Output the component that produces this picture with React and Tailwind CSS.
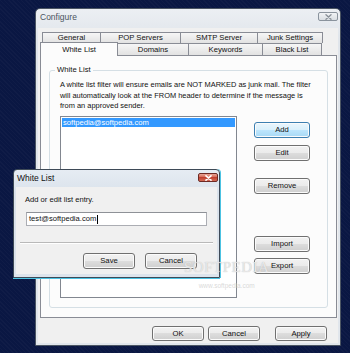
import React from "react";

const F = { fontFamily: '"Liberation Sans", Arial, sans-serif' };

function Btn({ children, className = "", def = false }) {
  return (
    <div
      className={
        "flex items-center justify-center rounded-[3px] border text-[7.7px] leading-none text-[#111] shadow-[inset_0_0_0_1px_#fbfbfb] " +
        (def
          ? "border-[#3c7fb1] bg-[linear-gradient(#eaf6fd_0%,#d9f0fc_50%,#bee6fd_50%,#a7d9f5_100%)] "
          : "border-[#707070] bg-[linear-gradient(#f2f2f2_0%,#ebebeb_50%,#dddddd_50%,#cfcfcf_100%)] ") +
        className
      }
    >
      {children}
    </div>
  );
}

function Tab({ label, className = "" }) {
  return (
    <div
      className={
        "flex items-center justify-center border-t border-l border-[#898c95] bg-[linear-gradient(#f6f6f6,#e2e2e2)] text-[7.7px] leading-none text-[#111] " +
        className
      }
    >
      {label}
    </div>
  );
}

function XGlyph({ color, stroke = 1.4 }) {
  return (
    <svg width="7" height="6" viewBox="0 0 7 6">
      <path d="M1 0.8 L6 5.2 M6 0.8 L1 5.2" stroke={color} strokeWidth={stroke} strokeLinecap="round" />
    </svg>
  );
}

export default function App() {
  return (
    <div className="relative w-[350px] h-[353px] overflow-hidden bg-[#0a1743]" style={F}>
      <div className="absolute inset-0 bg-[repeating-linear-gradient(45deg,rgba(255,255,255,0.025)_0px,rgba(255,255,255,0.025)_1px,transparent_1px,transparent_3px)]" />

      {/* Configure window */}
      <div className="absolute left-[35px] top-[8px] w-[306px] h-[338px] rounded-t-[5px] border border-[#4b5563] bg-[linear-gradient(#eceff3,#e0e5eb_30px,#e1e6ec)] flex flex-col">
        <div className="h-[19px] flex items-start justify-between pl-[4px] pr-[2px]">
          <span className="pt-[2px] leading-[12px] text-[8.5px] text-[#4a545e]">Configure</span>
          <div className="mt-[3px] w-[20px] h-[9px] rounded-[2px] border border-[#8a939d] bg-[linear-gradient(#f1f3f5,#d9dee3)] flex items-center justify-center">
            <XGlyph color="#8b929a" />
          </div>
        </div>
        <div className="mx-[2px] h-[315px] bg-[#f0f0f0] flex flex-col">
          <div className="mt-[4px] ml-[4px] h-[11px] flex">
            <Tab label="General" className="w-[58px]" />
            <Tab label="POP Servers" className="w-[80px]" />
            <Tab label="SMTP Server" className="w-[77px]" />
            <Tab label="Junk Settings" className="w-[66px] border-r" />
          </div>
          <div className="ml-[2px] h-[12px] flex items-end">
            <div className="relative z-10 -mb-px w-[78px] h-[14px] flex items-center justify-center border-t border-l border-r border-[#898c95] bg-[#fcfcfc] text-[7.7px] leading-none text-[#111]">
              White List
            </div>
            <Tab label="Domains" className="w-[70px] h-[12px] border-l-0" />
            <Tab label="Keywords" className="w-[74px] h-[12px]" />
            <Tab label="Black List" className="w-[60px] h-[12px] border-r" />
          </div>
          <div className="ml-[2px] w-[297px] h-[263px] border border-[#898c95] bg-[#fcfcfc]">
            <div className="relative mt-[14px] ml-[8px] w-[279px] h-[238px] rounded-[3px] border border-[#d5dfe5]">
              <span className="absolute left-[5px] -top-[6px] px-[2px] bg-[#fcfcfc] text-[7.7px] leading-[10px] text-[#111]">
                White List
              </span>
              <div className="pl-[10px] pt-[9px]">
                <div className="text-[7.45px] leading-[10.5px] text-[#111] whitespace-nowrap">
                  <div>A white list filter will ensure emails are NOT MARKED as junk mail. The filter</div>
                  <div>will automatically look at the FROM header to determine if the message is</div>
                  <div>from an approved sender.</div>
                </div>
                <div className="mt-[4px] flex">
                  <div className="w-[177px] h-[182px] border border-[#828790] bg-white p-[1px]">
                    <div className="h-[9px] bg-[#3399ff] pl-[1px] text-[7.6px] leading-[9px] text-white">
                      softpedia@softpedia.com
                    </div>
                  </div>
                  <div className="ml-[17px] w-[56px] flex flex-col">
                    <Btn def className="mt-[6px] h-[16px]">Add</Btn>
                    <Btn className="mt-[7px] h-[16px]">Edit</Btn>
                    <Btn className="mt-[17px] h-[16px]">Remove</Btn>
                    <Btn className="mt-[42px] h-[16px]">Import</Btn>
                    <Btn className="mt-[6px] h-[16px]">Export</Btn>
                  </div>
                </div>
              </div>
            </div>
          </div>
          <div className="mt-[8px] flex">
            <Btn className="ml-[114px] w-[52px] h-[15px]">OK</Btn>
            <Btn className="ml-[4px] w-[52px] h-[15px]">Cancel</Btn>
            <Btn className="ml-[15px] w-[52px] h-[15px]">Apply</Btn>
          </div>
        </div>
      </div>

      {/* White List dialog */}
      <div className="absolute left-[13px] top-[169px] w-[207px] h-[109px] rounded-t-[4px] border border-[#3e4a57] bg-[linear-gradient(#e6ecf3,#dae2eb_24px,#dde4ec)] flex flex-col shadow-[0_1px_0_#4cc3e3,1px_0_0_#4cc3e3]">
        <div className="h-[17px] flex items-start justify-between pl-[3px] pr-[1px]">
          <span className="pt-[2px] leading-[12px] text-[8.5px] text-[#111]">White List</span>
          <div className="mt-[3px] w-[20px] h-[9px] rounded-[2px] border border-[#6e2a24] bg-[linear-gradient(#e8a596,#d4604e_50%,#c0402f_50%,#d36a55)] flex items-center justify-center">
            <XGlyph color="#ffffff" stroke={1.6} />
          </div>
        </div>
        <div className="mx-[2px] h-[87px] bg-[#f0f0f0] flex flex-col">
          <div className="pl-[9px] pt-[8px] text-[7.6px] leading-[10px] text-[#111]">Add or edit list entry.</div>
          <div className="mt-[7px] ml-[10px] w-[181px] h-[14px] border border-[#abadb3] border-t-[#8e9197] bg-white flex items-center pl-[2px] text-[7.6px] leading-none text-[#111]">
            test@softpedia.com
            <span className="ml-[0.5px] inline-block w-px h-[9px] bg-black" />
          </div>
          <div className="mt-[16px] ml-[4px] w-[193px] border-t border-b border-t-[#b9b9b9] border-b-white" />
          <div className="mt-[9px] flex">
            <Btn className="ml-[67px] w-[52px] h-[16px]">Save</Btn>
            <Btn className="ml-[10px] w-[52px] h-[16px]">Cancel</Btn>
          </div>
        </div>
      </div>

      {/* watermark */}
      <div className="pointer-events-none absolute left-[184px] top-[259px] flex flex-col items-center">
        <span className="text-[15px] leading-[16px] tracking-[0.5px] text-[#fbfbfb]/70 [text-shadow:0_0_1px_#b0b0b0]" style={{ fontFamily: '"Liberation Serif", serif' }}>
          SOFTPEDIA
        </span>
        <span className="mt-[8px] text-[6.5px] leading-none text-[#cfcfcf]/80">www.softpedia.com</span>
      </div>
    </div>
  );
}
